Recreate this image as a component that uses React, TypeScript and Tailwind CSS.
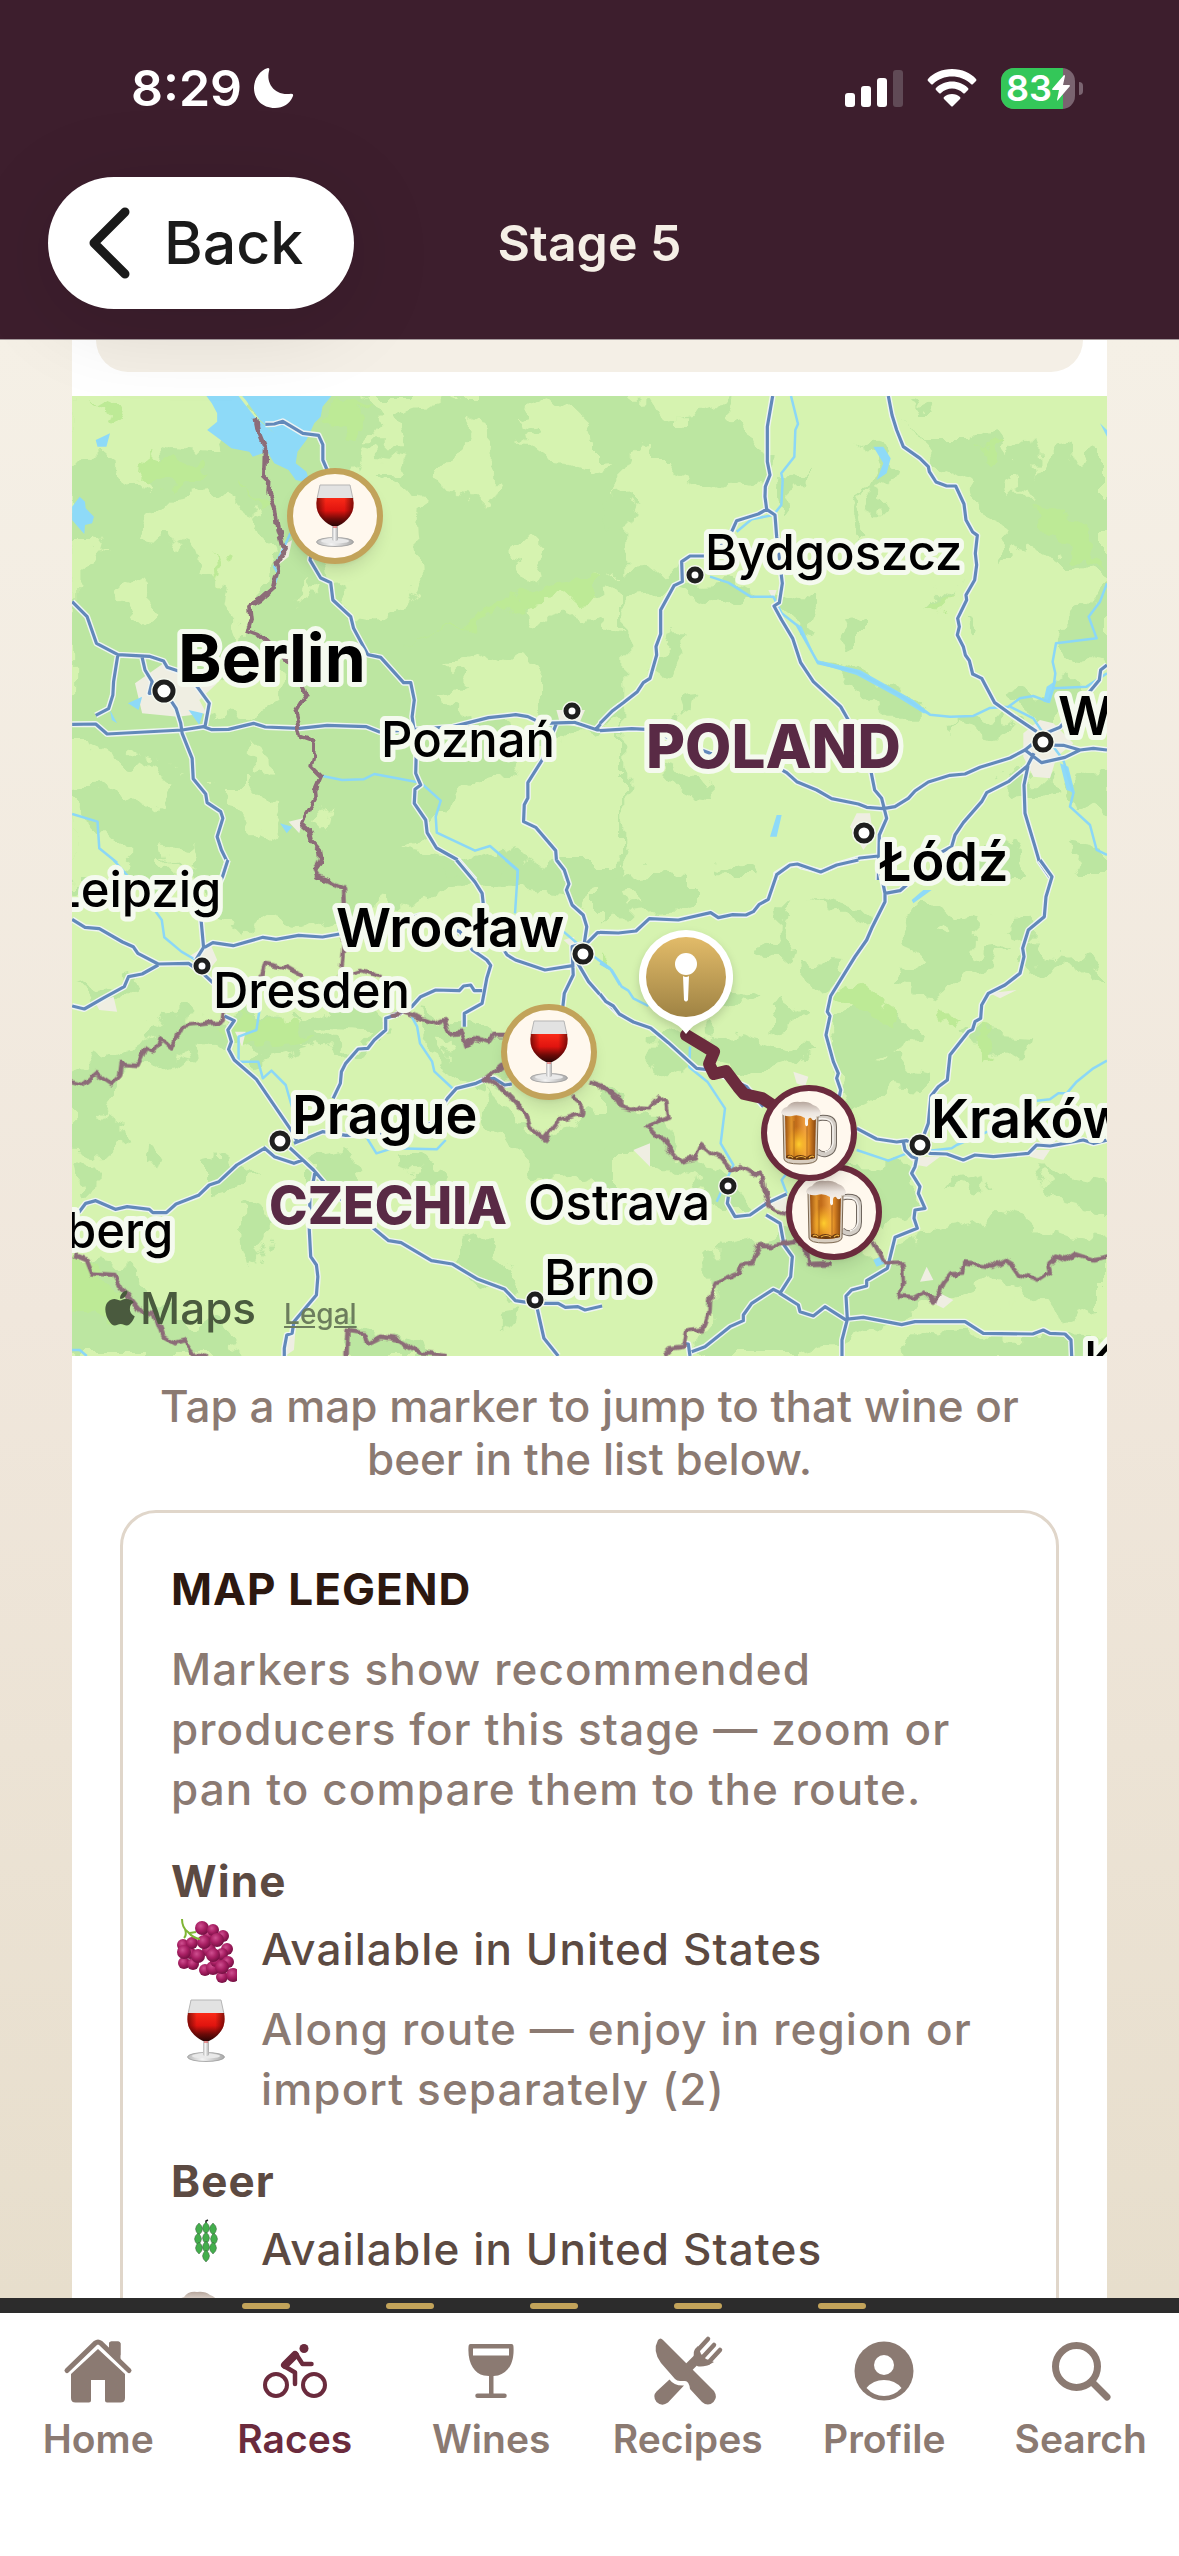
import type { ReactNode } from "react";
import { useState } from "react";
import { FaApple } from "react-icons/fa";
import clsx from "clsx";

type Tile = {
    id: string;
    transform: string;
    dark: string[];
    light: string[];
    lush: string[];
    water: string[];
    urban: string[];
    rivers: string[];
    roads: string[];
    borders: string[];
};

// The map is stored as four tiles, each with its own local units
const TILES: Tile[] = [
    {
        id: "nw",
        transform: "translate(60 380) scale(0.35714 0.33333)",
        dark: ["M20 30H1580V1520H20Z"],
        light: [
            "M20 30H520L560 150L470 130L440 220L300 200L240 330L140 240L20 250Z",
            "M290 350L420 330L560 400L600 520L590 610L530 680L520 780L460 690L470 600L400 590L380 520L300 480L210 470L240 400Z",
            "M20 480L110 480L150 540L60 560L60 640L20 640Z",
            "M840 210L980 230L900 300L1010 330L1000 440L1010 640L880 720L800 700L770 600L680 520L900 400L820 300Z",
            "M860 48H1130L950 110L970 190L850 190L900 120Z",
            "M1140 120L1210 140L1200 230L1260 300L1230 370L1130 370L1060 280L1110 210Z",
            "M1260 90L1380 50L1460 130L1568 220L1520 300L1420 260L1370 200L1280 210L1330 140Z",
            "M170 600L240 620L270 670L220 720L160 660Z",
            "M1270 500L1360 500L1330 590L1270 560Z",
            "M1080 860L1230 820L1360 860L1350 960L1280 1040L1150 1020L1060 940L1140 920Z",
            "M1320 640L1568 580V760L1450 700L1330 740Z",
            "M1380 1080L1568 1040V1500H1440L1240 1400L1130 1440L930 1400L1020 1350L1080 1260L1240 1200L1330 1130Z",
            "M80 1080L190 1150L330 1190L260 1280L150 1230L20 1240V1080Z",
            "M470 900L600 880L620 960L560 1010L470 990L420 1040L390 960Z",
            "M540 1090L600 1150L540 1180L510 1120Z",
            "M430 1200L530 1200L600 1280L560 1380L490 1300Z",
            "M300 1390L390 1400L370 1450L310 1460Z",
            "M20 1260L100 1330L200 1440L180 1500H20Z",
            "M760 1250L740 1340L710 1310Z",
            "M690 600L720 640L660 680Z",
        ],
        lush: [
            "M250 200L400 260L370 300L240 310Z",
            "M780 60L880 90L830 150L740 120Z",
            "M1340 610L1568 590V640L1330 670L1140 730L960 800L1100 740Z",
            "M430 500L450 560L440 600Z",
            "M90 60L180 100L140 140Z",
            "M510 330L590 360L560 400Z",
        ],
        water: [
            "M410 48H500L545 110L600 160L560 120L520 60L510 48H760L735 80L730 110L712 130L690 180L665 215L660 250L690 275L700 310L660 300L640 270L600 250L580 215L540 230L530 215L480 205L450 180L412 150L440 125L440 100L425 70Z",
            "M100 180L140 160L130 200L105 200Z",
            "M34 380L55 350L70 365L72 385L95 410L90 430L70 435L68 462L50 440L34 420Z",
            "M190 970L230 950L220 990Z",
            "M360 990L400 1000L390 1035Z",
            "M140 990L160 1030L145 1020Z",
            "M616 1330L650 1340L635 1360Z",
        ],
        urban: [
            "M210 910L290 850L370 910L440 910L390 960L410 1000L330 1010L230 1000Z",
            "M1390 990L1470 990L1450 1040L1400 1030Z",
            "M640 1325L680 1315L670 1360Z",
            "M620 500L650 480L640 530L605 560Z",
        ],
        rivers: [
            "M645 460L628 500L600 560L610 580L598 625",
            "M735 1188L790 1200L850 1198L880 1182L1010 1208L1066 1262L1052 1310L1055 1358L1162 1412L1204 1398L1282 1470L1280 1500",
            "M34 1302L105 1325L110 1405L160 1448",
        ],
        roads: [
            "M575 133L600 132L624 124L680 160L724 166L736 194V240L748 270L700 540L730 594L758 608L764 660L814 710L822 745L862 824L898 832L962 908L982 908L992 960L986 1010L998 1100L996 1180L1010 1215L994 1228L992 1270L1024 1320L1028 1358L1054 1404L1114 1440L1162 1500",
            "M34 665L76 710L102 790L162 824L250 829L290 843L300 862L350 880L384 920L418 970L406 1040",
            "M162 824L150 905L148 945L136 986L100 1006",
            "M230 832L238 870L258 905L250 940L292 932L325 985L338 1030L342 1060L370 1135L373 1196L408 1242L412 1268L450 1295L456 1315L440 1370L452 1410L468 1445L454 1490",
            "M34 1033L100 1032L132 1062L342 1050L402 1040L425 1049L472 1048L542 1030L575 1041L670 1045L748 1036L858 1040L895 1056L1100 1040L1200 1013L1276 1004L1310 1010L1350 1030L1440 1027L1505 1050H1568",
            "M1500 1048L1540 1000L1568 975",
            "M1390 1030L1350 1140L1310 1208V1254L1300 1274L1298 1325L1332 1342L1388 1412L1390 1440L1410 1468L1420 1500",
        ],
        borders: [
            "M548 118L555 155L574 205L572 285L586 300L584 340L602 390L608 440L622 498L632 505L604 550L610 575L598 625L562 660L530 680L534 720L526 750L556 762L640 850L685 925L690 945L658 1000L672 1070L712 1085V1130L704 1160L730 1188L714 1228L716 1260L676 1328L694 1345L702 1380L728 1412L732 1446L714 1470L720 1490L755 1502",
        ],
    },
    {
        id: "ne",
        transform: "translate(600 380) scale(0.33333)",
        dark: [
            "M0 60L150 48L190 110L400 70L450 180L540 230L490 320L400 300L330 340L270 330L230 240L140 240L110 180L80 260L0 270Z",
            "M20 360L120 350L90 430L20 470Z",
            "M610 250L600 320L550 380L540 320Z",
            "M770 170L830 170L870 230L900 250L860 300L830 320L870 400L840 400L810 330L770 420L820 480L770 490L740 430L790 350L830 270Z",
            "M910 110L950 180L1120 180L1180 150L1230 220L1290 170L1310 290L1400 160L1430 280L1480 180L1521 200V600L1440 540L1360 540L1280 490L1200 550L1220 470L1180 400L1140 330L1060 280L980 250Z",
            "M930 50L1010 90L950 90Z",
            "M0 590L220 570L260 600L380 590L460 640L420 690L240 630L0 650Z",
            "M500 620L620 660L660 730L620 760L560 710Z",
            "M720 730L780 720L780 780L750 800Z",
            "M1100 710L1150 750L1120 790Z",
            "M1070 610L1010 690L970 700L1030 640Z",
            "M660 860L820 890L960 970L970 1010L860 1010L760 930Z",
            "M1060 1030L1220 1000L1270 1060L1200 1080L1100 1060Z",
            "M1240 960L1400 880L1440 920L1340 1030L1270 990Z",
            "M1380 760L1521 600V860L1450 850Z",
            "M190 1170L320 1210L320 1260L260 1250Z",
            "M1200 1180L1350 1180L1400 1240L1260 1250Z",
            "M1420 1200L1521 1160V1320L1440 1290Z",
            "M220 760L260 760L220 850L160 870Z",
            "M1100 1440L1200 1400L1260 1500H1100Z",
            "M1400 1380L1521 1400V1500H1440Z",
            "M220 960L300 950L290 1000L230 990Z",
            "M0 1450L80 1400L30 1470L0 1500Z",
            "M360 1450L460 1470L450 1500H400Z",
        ],
        light: ["M240 100H270V140H240Z", "M1220 300L1260 300L1280 350L1240 350Z"],
        lush: [
            "M1070 620L1010 690L970 700Z",
            "M1150 200L1210 180L1180 240L1150 240Z",
            "M1280 370L1400 370L1470 470L1500 560L1380 480Z",
        ],
        water: [
            "M820 200L850 200L872 235L860 280L830 300L850 250Z",
            "M530 1305H545L530 1370H510Z",
            "M590 730L605 740L650 840L780 870L940 960L990 1000L970 1000L890 950L770 885L650 850Z",
            "M1380 1150L1405 1160L1425 1240L1400 1230Z",
            "M1500 130L1521 150V170Z",
            "M1340 920L1370 900L1350 970L1330 965Z",
        ],
        urban: [
            "M1270 1060L1320 1020L1360 1030L1420 1090L1370 1130L1350 1195L1300 1190L1270 1130Z",
            "M770 1300L810 1300L820 1370L790 1410L750 1340Z",
            "M505 630L530 630L520 660Z",
        ],
        rivers: [
            "M573 48L594 132L586 150L583 230L544 280L548 300L544 375L520 405L455 418L410 455",
            "M330 590L385 608L452 650H520L545 700L590 735L655 850L770 875L900 945L990 1004L1050 1010L1120 1008L1170 984L1225 980L1260 955L1300 948L1345 965L1360 925L1460 920L1521 880",
            "M1521 610L1500 665L1466 710L1490 775L1368 790L1358 845L1366 880L1360 925",
            "M1230 980L1300 1015L1330 1060L1390 1140L1420 1240L1410 1280L1470 1335L1490 1410L1521 1425",
        ],
        roads: [
            "M518 48L502 140V245L510 285L496 320L495 350L500 388L525 405L530 470L547 610L538 668L522 678L545 720L578 775L602 848L640 905L722 980L745 1020L800 1110L824 1230L845 1255L860 1315L838 1365L835 1500",
            "M500 388L475 402L410 422L395 455L340 528H270L245 545L247 605L222 617L182 690V762L168 800L170 825L150 895L130 908L112 935L70 968L38 992L0 1030",
            "M865 48L876 105L890 150L910 200L960 235L985 260L988 275L1008 306L1040 318H1067L1092 372L1098 420L1118 456L1132 466L1126 520L1130 555L1124 600L1098 645L1100 660L1073 715L1078 740L1072 765L1090 800L1096 825L1108 842L1118 882L1145 895L1184 968L1240 1008L1310 1055",
            "M0 1052L95 1046L140 1048L330 1120L500 1145L560 1178L590 1205L650 1230L695 1256L775 1272L800 1282L850 1286L885 1280L925 1255L945 1233L985 1206L1050 1186L1095 1182L1140 1162L1230 1134L1275 1110L1300 1090",
            "M1521 855L1502 870L1498 900L1465 940L1380 1042L1340 1058",
            "M1521 1110L1480 1105L1440 1110L1390 1096L1340 1095",
            "M1275 1110L1325 1148L1395 1132L1440 1110",
            "M1302 1120L1282 1158L1225 1205L1160 1238L1145 1265L1090 1328L1065 1365L1055 1400L1000 1430",
            "M1284 1158L1272 1215L1275 1300L1305 1400L1318 1445L1356 1500",
            "M528 1500V1482L570 1455L592 1452L605 1460L665 1475L710 1455L780 1434L835 1428",
        ],
        borders: [],
    },
    {
        id: "sw",
        transform: "translate(60 860) scale(0.35714 0.33333)",
        dark: [
            "M340 0H1040L1140 60L980 140L900 130L800 230L720 180L640 210L540 180L480 220L420 120Z",
            "M1260 30L1390 0H1568V60L1460 110L1300 90Z",
            "M20 640L180 560L330 460L480 480L470 560L330 600L200 640L120 750L200 820L130 880L20 870Z",
            "M480 460L620 480L700 560L560 600L500 560Z",
            "M640 460L860 430L940 480L880 560L760 600L680 540Z",
            "M980 450L1240 500L1300 650L1180 680L1060 620Z",
            "M1200 680L1330 840L1568 740V1020L1480 940L1360 980L1260 860L1160 780Z",
            "M240 860L300 870L280 930L230 920Z",
            "M700 900L800 880L850 960L780 1000L700 960Z",
            "M950 900L1080 920L1080 970L980 950Z",
            "M420 920L500 900L560 950L480 980L420 1000Z",
            "M510 1030L590 1080L530 1240L510 1130Z",
            "M40 930L100 900L90 1010L50 1010Z",
            "M20 1200L160 1220L280 1340L420 1400L560 1488H20Z",
            "M800 1400L900 1420L1080 1488H800Z",
            "M1130 1120L1240 1200L1290 1300L1190 1290L1120 1220Z",
            "M1240 1340L1290 1330L1280 1410L1240 1400Z",
            "M40 390L120 370L220 340L150 420Z",
        ],
        light: ["M720 510L860 520L830 560L770 570Z", "M300 20L400 60L370 90L300 70Z", "M1060 540L1110 560L1080 600Z"],
        lush: ["M20 1180L120 1240L200 1420L100 1380L20 1300Z", "M430 500L640 470L720 540L500 560Z"],
        water: [],
        urban: [
            "M360 290L420 250L440 300L410 340Z",
            "M100 430L150 410L160 455L110 450Z",
            "M630 1440L660 1400L655 1470L630 1488Z",
            "M1410 240L1440 230L1440 270Z",
            "M490 515L520 515L510 560Z",
        ],
        rivers: [
            "M150 0L225 90L285 180L292 232L340 275L380 300",
            "M560 440L550 510L500 530V605H555L568 655L592 632L632 675L652 750",
            "M985 470L1000 500L1008 550L1042 605L1048 634L1104 690L1080 715",
            "M860 835L886 880L930 865L1055 868L1080 840",
            "M1248 0L1282 32L1274 160",
            "M1410 215L1470 270L1540 325L1568 375",
            "M34 1470H55L75 1488",
        ],
        roads: [
            "M34 178L70 202L110 206L175 246L205 260L218 280L275 312L360 310L400 340L430 370",
            "M34 438L68 447L125 412L180 380L192 350L230 342L275 315",
            "M470 0L455 50L430 110L395 180L402 262L380 300",
            "M405 262L428 248L485 257L568 232L605 238L668 226L735 231L900 200L1010 165L1120 215L1155 270L1195 300L1206 316L1195 355L1182 430L1132 460V500",
            "M1110 0L1162 66L1182 100L1190 180L1252 285L1275 300L1358 330L1440 316",
            "M1390 0L1412 30L1425 72L1418 90L1434 135L1465 165L1475 200L1468 250L1434 260L1437 345L1412 400L1408 440",
            "M1475 250L1505 218H1568",
            "M1450 310L1480 365L1525 420L1568 465",
            "M460 468L488 482L470 510L480 545L472 568L488 600L550 658L650 815L665 848",
            "M1182 392L1160 392L1150 375L1130 378L1118 392L1052 390L1010 410L985 440L940 465L912 475V510L880 540L862 565L835 567L800 610L788 635L785 670L765 715",
            "M1265 672L1245 675L1215 655L1190 658L1165 670L1110 685L1085 715L1040 790L970 820L800 826L735 815L655 850",
            "M640 860L710 930L750 980L850 1080L920 1142L955 1148L1040 1202L1098 1212L1170 1258L1245 1288L1275 1322L1325 1330L1395 1330L1415 1342L1450 1340L1470 1350L1518 1338",
            "M570 862L600 890L655 910L680 900",
            "M572 865L495 915L445 965L418 975L388 1006L325 1032L298 1058H260L250 1048L188 1040L155 1048L100 1022L72 1030L52 1058",
            "M714 935L710 960L700 1000L698 1110L702 1190L718 1215L722 1250L718 1305L655 1385L650 1420L635 1425L628 1465V1488",
            "M1335 1340L1355 1435L1395 1488",
        ],
        borders: [
            "M730 0L714 32L722 48L795 85L800 200L785 350L840 330L900 352",
            "M34 664L65 672L100 640L145 672L165 650L170 612L220 615L240 565L262 575L280 535L310 562L340 500L452 485L455 460L565 350L575 312L640 325L680 350",
            "M920 460L960 455L1050 490L1075 478L1090 520L1125 515L1138 560L1160 535L1200 548L1215 525L1245 525",
            "M1480 665L1520 680L1568 720V740",
            "M1240 612L1192 655L1245 690L1305 765L1315 800L1358 838L1400 780L1440 765L1462 762V735L1435 710",
            "M40 1185L75 1200L90 1240L150 1245L175 1290L225 1355L268 1365L290 1430L320 1450L352 1440L378 1480L405 1488",
            "M802 1488L805 1412L855 1420L862 1450L900 1430L950 1440L1010 1480L1080 1488",
        ],
    },
    {
        id: "se",
        transform: "translate(600 860) scale(0.33333)",
        dark: [
            "M0 50L160 30L270 40L270 120L210 160L100 170L0 160Z",
            "M520 130L570 130L540 200L570 240L560 310L480 300L530 240Z",
            "M640 110L820 160L820 200L760 180Z",
            "M880 170L960 130L1040 140L1130 190L1120 280L1230 270L1180 330L1060 340L1010 400L900 380L960 290L890 240Z",
            "M590 290L740 300L720 370L640 380L600 330Z",
            "M760 380L840 420L970 540L840 600L1000 620L960 700L880 690L760 750L700 620L690 500L760 440Z",
            "M500 450L560 410L600 470L520 500Z",
            "M140 560L320 500L480 540L660 580L480 640L330 600L230 640L140 600Z",
            "M340 330L470 390L370 450Z",
            "M1060 500L1300 520L1290 570L1140 590Z",
            "M1190 180L1290 170L1280 330L1400 310L1521 380V340L1440 290L1330 280Z",
            "M0 690L180 780L250 900L400 950L480 1050H340L250 930L0 880Z",
            "M740 900L930 920L960 1050L840 1100L780 960Z",
            "M340 1150L600 1100L860 1200L980 1120L1200 1080L1521 1140V1330L1400 1380L1200 1250L1000 1330L900 1370L620 1488H280L340 1350Z",
            "M1030 980L1180 950L1130 1010Z",
            "M1320 930L1521 970V1060L1400 1030Z",
            "M940 1420L1521 1440V1488H900Z",
            "M0 120L60 140L0 200Z",
        ],
        light: ["M60 100L120 90L140 130L90 140Z", "M1030 200L1070 230L1020 240Z", "M1140 1290L1250 1320L1180 1360Z"],
        lush: ["M780 370L880 440L890 500L680 420Z", "M1150 500L1190 600L1145 610Z", "M1020 450L1100 460L1040 480Z", "M0 250L50 300L0 290Z"],
        water: ["M970 90L995 90L940 130L935 120Z", "M820 1200L840 1190L855 1210L830 1220Z"],
        urban: [
            "M580 635L625 650L615 680L590 670Z",
            "M490 1030L560 1010L560 1060Z",
            "M920 890L1020 890L980 920L950 915Z",
            "M1290 870L1350 870L1330 900L1290 890Z",
            "M1020 1300L1060 1320L1030 1345L1000 1330Z",
            "M100 870L150 850L150 920Z",
            "M1170 400L1250 390L1200 415Z",
            "M980 1220L1000 1260L960 1265Z",
        ],
        rivers: [
            "M0 310L35 330L65 380L85 392L100 415L145 438",
            "M270 560L268 622L322 665L375 745L362 850L400 915L350 1025",
            "M1521 602L1480 625L1430 665L1400 700L1375 700L1350 718L1310 722",
            "M770 870L865 902L920 880L1055 865L1070 855L1170 812",
            "M560 940L545 960L560 1000",
        ],
        roads: [
            "M0 217L55 219L108 213L148 176L235 180L332 158L355 173L398 164L438 165L460 155L478 133L505 118L530 44L570 15L592 12L662 36L710 15L775 0",
            "M0 402L18 425L40 438L58 462L100 486L152 504L205 548L290 625L330 630L440 680L490 740",
            "M835 0L855 100L900 92L960 40",
            "M855 100V125L815 205L800 240L765 290L692 408L682 455L690 468L678 525L700 605L715 640L710 655L722 690L718 710",
            "M1320 0L1356 50L1338 110L1333 170L1285 210L1268 265L1272 290L1260 340L1215 375L1165 400L1145 435L1142 475L1125 485L1118 508L1105 515L1050 585L1042 660L1015 680L993 708L985 790L970 830",
            "M770 805L830 837L890 846L920 842L960 860L990 880L1040 882L1090 900L1125 885L1180 890L1285 880L1310 855L1350 858L1450 840L1480 850L1521 840",
            "M910 845L915 870L935 890L950 895L945 920L935 940L960 980L955 1000L975 1045L945 1050L942 1075L952 1105L885 1132L862 1225L800 1262V1278L755 1290L738 1308L742 1378L726 1440V1488",
            "M385 1010L382 1030L405 1070L450 1065L500 1030L560 1002",
            "M498 1065L540 1090L552 1155L577 1190L572 1250L540 1300L595 1335L600 1355L640 1368L675 1340L735 1378L790 1372L905 1394L945 1385H1065L1095 1385L1150 1420L1298 1422L1330 1410L1350 1420L1395 1422L1413 1440L1415 1488",
            "M540 1298L520 1288L455 1330L430 1365V1382L390 1400L315 1460L275 1475",
            "M250 1450L265 1452L270 1488",
        ],
        borders: [
            "M0 680L50 718L62 742L95 750L120 740L150 742L175 710L198 725L205 770L175 780L145 800L175 832L190 835L205 865L240 905L285 895L300 855L330 880L365 895L395 930L420 918L465 942L482 935L490 990L505 1040L555 1062",
            "M190 1488L212 1465L250 1460L258 1415L310 1408L328 1360L330 1320L350 1270L420 1240L430 1212L450 1210L480 1158L515 1158L580 1145L620 1165L625 1212L695 1210",
            "M820 1145L855 1210L908 1208L912 1275L900 1310L940 1315L970 1298L1005 1328L1030 1265L1050 1240L1088 1238L1095 1210L1180 1220L1215 1200L1240 1215L1260 1245L1310 1265L1350 1238L1345 1210L1370 1190L1395 1200L1425 1180L1480 1198L1521 1190",
        ],
    },
];

const PLACES = [
    { name: "Berlin", x: 178, y: 682, kind: "capital" },
    { name: "Poznań", x: 381, y: 757, kind: "town" },
    { name: "Bydgoszcz", x: 705, y: 570, kind: "town" },
    { name: "POLAND", x: 646, y: 768, kind: "poland" },
    { name: "W", x: 1058, y: 735, kind: "city" },
    { name: "Łódź", x: 879, y: 881, kind: "city" },
    { name: "Leipzig", x: 53, y: 907, kind: "town" },
    { name: "Wrocław", x: 336, y: 947, kind: "city" },
    { name: "Dresden", x: 213, y: 1008, kind: "town" },
    { name: "Prague", x: 292, y: 1134, kind: "city" },
    { name: "CZECHIA", x: 269, y: 1224, kind: "czechia" },
    { name: "Ostrava", x: 528, y: 1220, kind: "town" },
    { name: "Kraków", x: 931, y: 1138, kind: "city" },
    { name: "berg", x: 66, y: 1248, kind: "town" },
    { name: "Brno", x: 544, y: 1295, kind: "town" },
    { name: "K", x: 1084, y: 1377, kind: "town" },
];

const PLACE_STYLES: Record<string, string> = {
    capital: "fill-black text-[66px] font-bold",
    city: "fill-black text-[54px] font-semibold",
    town: "fill-black text-[49px] font-medium",
    poland: "fill-[#592a45] text-[60px] font-extrabold",
    czechia: "fill-[#592a45] text-[52px] font-extrabold",
};

const DOTS = [
    [164, 691, 9],
    [572, 711, 6],
    [695, 575, 6],
    [1043, 742, 8],
    [864, 833, 8],
    [583, 954, 8],
    [202, 966, 6],
    [280, 1141, 8],
    [728, 1186, 6],
    [535, 1300, 6],
    [920, 1145, 8],
];

const MARKERS = [
    { id: "wine-1", kind: "wine", label: "Wine near Szczecin", x: 335, y: 516 },
    { id: "wine-2", kind: "wine", label: "Wine near the Czech border", x: 549, y: 1052 },
    { id: "beer-2", kind: "beer", label: "Beer in Żywiec", x: 834, y: 1212 },
    { id: "beer-1", kind: "beer", label: "Beer in Tychy", x: 809, y: 1133 },
];

function WineGlass({ id }: { id: string }) {
    return (
        <svg viewBox="0 0 38 64" className="h-16 w-[38px] overflow-visible" aria-hidden>
            <defs>
                <linearGradient id={`${id}-wine`} x1="0" y1="0" x2="0" y2="1">
                    <stop offset="0" stopColor="#fa2a18" />
                    <stop offset="0.45" stopColor="#e0140f" />
                    <stop offset="0.75" stopColor="#6d0a08" />
                    <stop offset="1" stopColor="#2c0505" />
                </linearGradient>
                <linearGradient id={`${id}-edge`}>
                    <stop offset="0" stopColor="#300" stopOpacity="0.6" />
                    <stop offset="0.25" stopColor="#300" stopOpacity="0" />
                    <stop offset="0.75" stopColor="#300" stopOpacity="0" />
                    <stop offset="1" stopColor="#300" stopOpacity="0.6" />
                </linearGradient>
                <linearGradient id={`${id}-glass`}>
                    <stop offset="0" stopColor="#b9b9b9" />
                    <stop offset="0.4" stopColor="#f4f4f4" />
                    <stop offset="1" stopColor="#a9a9a9" />
                </linearGradient>
            </defs>
            <path d="M4 1H34L37 15H1Z" fill="#e2e2e2" />
            <path d="M4 1H34L37 15M4 1L1 15" fill="none" stroke="#b5b5b5" />
            <ellipse cx="19" cy="58" rx="18.5" ry="4.5" fill={`url(#${id}-glass)`} stroke="#999" strokeWidth="0.8" />
            <ellipse cx="19" cy="57" rx="14" ry="2.5" fill="#e9e9e9" />
            <path d="M16 40H22V55Q22 57 19 57Q16 57 16 55Z" fill={`url(#${id}-glass)`} />
            <path d="M1 14H37Q39 25 34 32Q29 39 22 42H16Q9 39 4 32Q-1 25 1 14Z" fill={`url(#${id}-wine)`} />
            <path d="M1 14H37Q39 25 34 32Q29 39 22 42H16Q9 39 4 32Q-1 25 1 14Z" fill={`url(#${id}-edge)`} />
            <path d="M17 43H21" stroke="#e25555" strokeWidth="1.2" />
        </svg>
    );
}

function BeerMug({ id }: { id: string }) {
    return (
        <svg viewBox="0 0 56 64" className="h-16 w-14 overflow-visible" aria-hidden>
            <defs>
                <linearGradient id={`${id}-beer`}>
                    <stop offset="0" stopColor="#9c5212" />
                    <stop offset="0.2" stopColor="#e0942c" />
                    <stop offset="0.35" stopColor="#c06a18" />
                    <stop offset="0.65" stopColor="#f0a040" />
                    <stop offset="0.8" stopColor="#d37f22" />
                    <stop offset="1" stopColor="#85450f" />
                </linearGradient>
                <radialGradient id={`${id}-glow`} cx="0.45" cy="0.65" r="0.4">
                    <stop offset="0" stopColor="#ffce2e" />
                    <stop offset="1" stopColor="#ffb020" stopOpacity="0" />
                </radialGradient>
                <linearGradient id={`${id}-foam`} x1="0" y1="0" x2="0" y2="1">
                    <stop offset="0" stopColor="#b7a79d" />
                    <stop offset="0.45" stopColor="#ece5df" />
                    <stop offset="1" stopColor="#fffaf3" />
                </linearGradient>
            </defs>
            <path d="M36 18Q39 16 46 17Q53 18 53 26V42Q53 51 45 53Q40 54 36 50" fill="none" stroke="#6f665e" strokeWidth="6" />
            <path d="M36 18Q39 16 46 17Q53 18 53 26V42Q53 51 45 53Q40 54 36 50" fill="none" stroke="#d3cdc6" strokeWidth="4" />
            <path d="M37 18Q40 17 45 18Q51 19 52 26V42Q51 49 44 51" fill="none" stroke="#f6f3ef" strokeWidth="1.4" />
            <path d="M2 13H37L36 58Q35 63 19 63Q4 63 3 58Z" fill="#d8cdbf" stroke="#7b6750" strokeWidth="1" />
            <path d="M4 14H35L34 57Q20 61 5 57Z" fill={`url(#${id}-beer)`} />
            <path d="M4 14H35L34 57Q20 61 5 57Z" fill={`url(#${id}-glow)`} />
            <path d="M13 20V57M26 20V57" stroke="#9b5a17" strokeWidth="0.9" opacity="0.7" />
            <path d="M5 55Q9 52 13 56Q19 52 26 56Q30 52 34 55V57Q20 61 5 57Z" fill="#6b3a10" />
            <path d="M7 56Q10 54 12 57M15 57Q20 54 25 57M28 57Q31 54 33 56" fill="none" stroke="#f0b23e" strokeWidth="1.2" />
            <path
                d="M0 12Q1 7 6 6Q10 0 19 1Q27 0 32 4Q39 6 40 13Q38 17 35 15V18Q32 21 30 17Q28 16 27 19V24Q25 27 24 23V17Q18 13 11 15Q3 16 0 12Z"
                fill={`url(#${id}-foam)`}
            />
        </svg>
    );
}

const GRAPES = [
    [8, 44, 6], [17, 45, 6], [29, 51, 6], [37, 49, 7], [46, 58, 6], [57, 56, 7],
    [33, 31, 7], [40, 42, 6], [14, 34, 6], [33, 16, 6],
    [7, 26, 6], [16, 24, 6], [26, 9, 7], [37, 11, 6], [47, 17, 6], [51, 30, 6],
    [8, 33, 7], [22, 37, 7], [28, 23, 7], [41, 21, 7], [46, 35, 6], [37, 36, 7],
    [52, 43, 6], [46, 48, 7],
];

function Grapes() {
    return (
        <svg viewBox="0 0 61 64" className="h-16 w-[61px]" aria-hidden>
            <defs>
                <radialGradient id="grape" cx="0.4" cy="0.35" r="0.7">
                    <stop offset="0" stopColor="#cf4f90" />
                    <stop offset="0.5" stopColor="#a81f63" />
                    <stop offset="1" stopColor="#6d0d3d" />
                </radialGradient>
            </defs>
            {GRAPES.map(([cx, cy, r], i) => (
                <circle key={i} cx={cx} cy={cy} r={r} fill="url(#grape)" />
            ))}
            <path d="M6 0Q6 9 12 13Q17 19 24 20M9 10Q11 16 8 19M14 14L20 13" fill="none" stroke="#7fb534" strokeWidth="2" />
        </svg>
    );
}

const HOP_LEAVES = [
    [12, 9], [12, 19], [12, 28], [12, 37], [5, 10], [19, 10], [4, 20], [20, 20], [5, 29], [19, 29],
];

function Hops() {
    return (
        <svg viewBox="0 0 24 44" className="h-11 w-6" aria-hidden>
            <path d="M12 5V2L14 1" fill="none" stroke="#222" strokeWidth="1.5" />
            {HOP_LEAVES.map(([x, y], i) => (
                <path
                    key={i}
                    d={`M${x} ${y - 6}Q${x + 7} ${y} ${x} ${y + 6}Q${x - 7} ${y} ${x} ${y - 6}Z`}
                    fill="#43ae4c"
                    stroke="#3c5f40"
                    strokeWidth="0.5"
                />
            ))}
        </svg>
    );
}

function StatusBar() {
    return (
        <div className="flex h-[132px] items-center justify-between pt-11 pr-24 pl-[131px]">
            <div className="flex items-center gap-3">
                <span className="text-[50px] leading-[60px] font-semibold text-white">8:29</span>
                <svg viewBox="0 0 40 40" className="size-10" aria-hidden>
                    <path d="M14 0Q16 0 15 3C12 15 20 27 35 26Q40 25 39 28C36 36 29 40 21 40C8 40 0 31 0 20C0 11 6 2 14 0Z" fill="white" />
                </svg>
            </div>
            <div className="flex items-center gap-6">
                <svg viewBox="0 0 58 38" className="h-[38px] w-[58px]" aria-hidden>
                    <rect x="0" y="24" width="10" height="14" rx="3" fill="white" />
                    <rect x="16" y="17" width="10" height="21" rx="3" fill="white" />
                    <rect x="32" y="9" width="10" height="29" rx="3" fill="white" />
                    <rect x="48" y="1" width="10" height="37" rx="3" fill="#604a56" />
                </svg>
                <svg viewBox="0 0 50 38" className="h-[38px] w-[50px]" aria-hidden>
                    <path d="M25 0C35 0 44 4 49 10Q50 11 49 12L46 15Q45 16 44 15C39 10 32 7.500 25 7.500S11 10 6 15Q5 16 4 15L1 12Q0 11 1 10C6 4 15 0 25 0Z" fill="white" />
                    <path d="M25 12.500C31 12.500 37 15 41 19Q42 20 41 21L38 24Q37 25 36 24C33 21 29 19.500 25 19.500S17 21 14 24Q13 25 12 24L9 21Q8 20 9 19C13 15 19 12.500 25 12.500Z" fill="white" />
                    <path d="M25 25C28 25 31 26 33 28Q34 29 33 30L26 37Q25 38 24 37L17 30Q16 29 17 28C19 26 22 25 25 25Z" fill="white" />
                </svg>
                <div className="flex items-center gap-1">
                    <div className="relative flex h-[41px] w-[74px] items-center overflow-hidden rounded-[13px] bg-[#7a6470]">
                        <div className="absolute inset-y-0 left-0 w-[62px] bg-[#34c759]" />
                        <span className="relative pl-[5px] text-[36px] leading-10 font-semibold text-white">83</span>
                        <svg viewBox="0 0 18 26" className="relative h-[26px] w-[18px] shrink-0" aria-hidden>
                            <path d="M12 0L0 14Q0 15 1 15H7L5 25Q5 26 6 25L18 11Q18 10 17 10H11L13 1Q13 0 12 0Z" fill="white" />
                        </svg>
                    </div>
                    <div className="h-[13px] w-1 rounded-r-full bg-[#7a6470]" />
                </div>
            </div>
        </div>
    );
}

function RouteMap() {
    return (
        <div className="relative aspect-[1035/960] w-full overflow-hidden">
            <svg viewBox="72 396 1035 960" className="block size-full font-[Inter,sans-serif]" aria-label="Stage map">
                <defs>
                    <filter id="rough" x="0" y="0" width="1" height="1">
                        <feTurbulence type="fractalNoise" baseFrequency="0.035" numOctaves="3" seed="4" />
                        <feDisplacementMap in="SourceGraphic" scale="42" xChannelSelector="R" yChannelSelector="G" />
                    </filter>
                    <filter id="jagged" x="-0.1" y="-0.1" width="1.2" height="1.2">
                        <feTurbulence type="fractalNoise" baseFrequency="0.08" numOctaves="2" seed="9" />
                        <feDisplacementMap in="SourceGraphic" scale="9" xChannelSelector="R" yChannelSelector="G" />
                    </filter>
                </defs>
                <rect x="72" y="396" width="1035" height="960" fill="#d6f3b0" />
                <g filter="url(#rough)">
                    <rect x="20" y="340" width="1140" height="1080" fill="#d6f3b0" />
                    {TILES.map((tile) => (
                        <g key={tile.id} transform={tile.transform}>
                            <path d={tile.dark.join("")} fill="#bce6a1" />
                            <path d={tile.light.join("")} fill="#d6f3b0" />
                            <path d={tile.lush.join("")} fill="#bdea96" />
                        </g>
                    ))}
                </g>
                {TILES.map((tile) => (
                    <g key={tile.id} transform={tile.transform}>
                        <path d={tile.urban.join("")} fill="#efeee2" />
                        <path d={tile.water.join("")} fill="#8edaf8" />
                    </g>
                ))}
                <g fill="none" strokeLinejoin="round">
                    {TILES.map((tile) => (
                        <g key={tile.id} transform={tile.transform}>
                            <path d={tile.rivers.join("")} stroke="#8bd7f7" strokeWidth="2.5" vectorEffect="non-scaling-stroke" />
                            <path d={tile.roads.join("")} stroke="#eef4f4" strokeWidth="6" vectorEffect="non-scaling-stroke" />
                            <path d={tile.roads.join("")} stroke="#6289ba" strokeWidth="3.2" vectorEffect="non-scaling-stroke" />
                        </g>
                    ))}
                    <g filter="url(#jagged)">
                        {TILES.map((tile) => (
                            <g key={tile.id} transform={tile.transform}>
                                <path d={tile.borders.join("")} stroke="#8c6c78" strokeWidth="4.5" vectorEffect="non-scaling-stroke" />
                            </g>
                        ))}
                    </g>
                    <path
                        d="M686 1035L714 1052L709 1064L714 1074L726 1071L738 1087L744 1094L762 1098L780 1110"
                        stroke="#6b2b3d"
                        strokeWidth="12"
                        strokeLinecap="round"
                    />
                </g>
                {DOTS.map(([cx, cy, r]) => (
                    <g key={`${cx}-${cy}`}>
                        <circle cx={cx} cy={cy} r={r + 4} fill="#f4f8ee" />
                        <circle cx={cx} cy={cy} r={r} fill="white" stroke="#1f1f1f" strokeWidth="5" />
                    </g>
                ))}
                {PLACES.map((place) => (
                    <text
                        key={place.name}
                        x={place.x}
                        y={place.y}
                        className={PLACE_STYLES[place.kind]}
                        stroke="#f5faef"
                        strokeWidth="10"
                        strokeLinejoin="round"
                        paintOrder="stroke"
                    >
                        {place.name}
                    </text>
                ))}
            </svg>

            <div className="absolute bottom-5 left-7 flex items-baseline text-[#4a5a3e]">
                <FaApple className="size-10 self-center" aria-hidden />
                <span className="text-[44px] leading-[56px] font-medium">Maps</span>
                <a href="#legal" className="ml-7 text-[28px] leading-8 font-medium text-[#6c7d5d] underline">
                    Legal
                </a>
            </div>

            <button
                type="button"
                aria-label="Stage start"
                className="absolute h-[106px] w-[94px] -translate-x-1/2 drop-shadow-lg"
                style={{ left: `${((686 - 72) / 1035) * 100}%`, top: `${((930 - 396) / 960) * 100}%` }}
            >
                <svg viewBox="0 0 94 106" className="size-full" aria-hidden>
                    <defs>
                        <linearGradient id="pin" x1="0" y1="0" x2="0" y2="1">
                            <stop offset="0" stopColor="#e2bb69" />
                            <stop offset="1" stopColor="#9f8344" />
                        </linearGradient>
                    </defs>
                    <path d="M47 0A47 47 0 0 1 66 90Q54 94 47 104Q40 94 28 90A47 47 0 0 1 47 0Z" fill="white" />
                    <circle cx="47" cy="47" r="40" fill="url(#pin)" />
                    <circle cx="47" cy="34" r="11" fill="white" />
                    <path d="M44 46Q47 48 50 46L49 70Q47 73 45 70Z" fill="white" />
                </svg>
            </button>
            {MARKERS.map((marker) => (
                <button
                    key={marker.id}
                    type="button"
                    aria-label={marker.label}
                    className={clsx(
                        "absolute flex size-24 -translate-x-1/2 -translate-y-1/2 items-center justify-center rounded-full border-6 bg-[#fff8ee] shadow-lg",
                        marker.kind === "wine" ? "border-[#c2a35a]" : "border-[#6b2b3d]"
                    )}
                    style={{
                        left: `${((marker.x - 72) / 1035) * 100}%`,
                        top: `${((marker.y - 396) / 960) * 100}%`,
                    }}
                >
                    {marker.kind === "wine" ? <WineGlass id={marker.id} /> : <BeerMug id={marker.id} />}
                </button>
            ))}
        </div>
    );
}

function LegendRow({ icon, muted, children }: { icon: ReactNode; muted?: boolean; children: ReactNode }) {
    return (
        <li className="flex gap-5">
            <span className="flex h-[60px] w-[70px] shrink-0 items-start justify-center">{icon}</span>
            <span className={muted ? "text-[#8b7a72]" : "text-[#5c4a42]"}>{children}</span>
        </li>
    );
}

function MapLegend() {
    return (
        <section className="mx-12 mt-6 rounded-[36px] border-3 border-[#e0d6ca] px-12 pt-[46px] pb-12 text-[44px] leading-[60px] font-medium tracking-wide text-[#8b7a72]">
            <h2 className="font-bold text-[#2c1810]">MAP LEGEND</h2>
            <p className="mt-5">
                Markers show recommended producers for this stage — zoom or pan to compare them to the route.
            </p>
            <h3 className="mt-8 font-bold text-[#5c4a42]">Wine</h3>
            <ul className="mt-2 flex flex-col gap-5">
                <LegendRow icon={<Grapes />}>Available in United States</LegendRow>
                <LegendRow icon={<WineGlass id="legend" />} muted>
                    Along route — enjoy in region or import separately (2)
                </LegendRow>
            </ul>
            <h3 className="mt-8 font-bold text-[#5c4a42]">Beer</h3>
            <ul className="mt-2 flex flex-col gap-3">
                <LegendRow icon={<Hops />}>Available in United States</LegendRow>
                <LegendRow icon={<BeerMug id="legend-beer" />} muted>
                    Along route — enjoy in region or import separately (2)
                </LegendRow>
            </ul>
        </section>
    );
}

const TABS = [
    {
        name: "Home",
        icon: (
            <>
                <path d="M47 16V9Q47 6.500 49.500 6.500H56Q58.500 6.500 58.500 9V30Z" fill="currentColor" />
                <path d="M4.500 35.500L33.500 8.500Q36 6 38.500 8.500L67.500 35.500" fill="none" stroke="white" strokeWidth="10" />
                <path d="M5 35.500L33.500 8Q36 6 38.500 8L67 35.500" fill="none" stroke="currentColor" strokeWidth="5" strokeLinecap="round" />
                <path d="M47 16V9Q47 6.500 49.500 6.500H56Q58.500 6.500 58.500 9V27Z" fill="currentColor" />
                <path d="M36 14L63 39V63Q63 67.500 58.500 67.500H45Q43 67.500 43 65.500V45H29V65.500Q29 67.500 27 67.500H13.500Q9 67.500 9 63V39Z" fill="currentColor" />
            </>
        ),
    },
    {
        name: "Races",
        icon: (
            <g fill="none" stroke="currentColor" strokeLinecap="round" strokeLinejoin="round">
                <circle cx="17" cy="50" r="11" strokeWidth="4" />
                <circle cx="55" cy="50" r="11" strokeWidth="4" />
                <circle cx="45" cy="13.500" r="4.500" fill="currentColor" strokeWidth="0" />
                <path d="M36 20L26 30" strokeWidth="8" />
                <path d="M37 19L43.500 29H52.500M25 31L36 37.500V49" strokeWidth="4.500" />
            </g>
        ),
    },
    {
        name: "Wines",
        icon: (
            <>
                <path
                    fillRule="evenodd"
                    d="M15.500 9H56.500Q58.500 9 58.500 12C59.500 28 53 38 43 40.500L38.500 41V58.500H49.500A2 2 0 0 1 49.500 63H22.500A2 2 0 0 1 22.500 58.500H34V41L29 40.500C19 38 12.500 28 13.500 12Q13.500 9 15.500 9ZM18 13.500V20.500H54V13.500Z"
                    fill="currentColor"
                />
            </>
        ),
    },
    {
        name: "Recipes",
        icon: (
            <>
                <path d="M17.500 44.500Q22 51 32 50.500L16 67.500Q10 72 4.500 67Q0 61 4.500 56.500Z" fill="currentColor" />
                <path d="M33 36L48 21" stroke="currentColor" strokeWidth="9" />
                <path d="M43 26Q39 16 46 11L49 19L54 24L62 27Q52 33 45 31Z" fill="currentColor" />
                <path d="M56 4L45 16V26L50 28H56L68 15M62 10L50 23" fill="none" stroke="currentColor" strokeWidth="4.500" strokeLinecap="round" strokeLinejoin="round" />
                <path d="M6 5Q8.500 2 11 5L62 56Q66 62 61.500 67Q56 72 50 67L38 54Q37 46 33 46H28Q25 46 23 44L9 28Q0 16 6 5Z" fill="currentColor" />
            </>
        ),
    },
    {
        name: "Profile",
        icon: (
            <>
                <circle cx="36" cy="36" r="29.500" fill="currentColor" />
                <circle cx="36" cy="30" r="10" fill="white" />
                <path d="M18.500 53Q25 45 36 45T53.500 53Q46 61 36 61T18.500 53Z" fill="white" />
            </>
        ),
    },
    {
        name: "Search",
        icon: (
            <g fill="none" stroke="currentColor" strokeLinecap="round">
                <circle cx="31.500" cy="31.500" r="21" strokeWidth="7" />
                <path d="M47 47L62 62" strokeWidth="7" />
            </g>
        ),
    },
];

function TabBar() {
    const [active, setActive] = useState("Races");

    return (
        <footer className="relative z-10 shrink-0 bg-white">
            <div className="flex h-[15px] items-center gap-24 bg-[#2c2c2c] pl-[242px]">
                {[0, 1, 2, 3, 4].map((dash) => (
                    <span key={dash} className="h-[6px] w-12 rounded-sm bg-[#c2a35a]" />
                ))}
            </div>
            <nav className="grid h-[243px] grid-cols-6 items-start pt-[22px]">
                {TABS.map((tab) => (
                    <button
                        key={tab.name}
                        type="button"
                        onClick={() => setActive(tab.name)}
                        className={clsx(
                            "flex flex-col items-center gap-2 text-[39px] leading-[48px] font-semibold",
                            active === tab.name ? "text-[#6b2b3d]" : "text-[#8b7a72]"
                        )}
                    >
                        <svg viewBox="0 0 72 72" className="size-[72px]" aria-hidden>
                            {tab.icon}
                        </svg>
                        {tab.name}
                    </button>
                ))}
            </nav>
        </footer>
    );
}

export default function App() {
    return (
        <div className="flex h-screen flex-col overflow-hidden bg-white font-[Inter,sans-serif]">
            <header className="relative z-10 h-[340px] shrink-0 border-b border-[#a59a9c] bg-[#3d1e2d]">
                <StatusBar />
                <div className="grid grid-cols-[1fr_auto_1fr] items-center px-12 pt-[45px]">
                    <button
                        type="button"
                        className="flex h-[132px] w-[306px] items-center rounded-full bg-white pl-10 text-[59px] font-medium text-[#1a1a1a] shadow-[0_12px_90px_rgba(0,0,0,0.12)]"
                    >
                        <svg viewBox="0 0 44 72" className="mr-8 h-[72px] w-11" aria-hidden>
                            <path d="M37 5L6 36L37 67" fill="none" stroke="currentColor" strokeWidth="9" strokeLinecap="round" strokeLinejoin="round" />
                        </svg>
                        Back
                    </button>
                    <h1 className="text-[50px] leading-[60px] font-semibold text-[#f5efe6]">Stage 5</h1>
                </div>
            </header>

            <main className="min-h-0 flex-1 overflow-y-auto bg-linear-to-b from-[#f5f0e6] via-[#f0e7dc] to-[#e7decc] px-[72px] [scrollbar-width:none]">
                <div className="bg-white pb-12">
                    <div className="mx-6 mb-6 h-8 rounded-b-[32px] bg-[#f4efe6]" />
                    <RouteMap />
                    <p className="mt-6 px-16 text-center text-[44px] leading-[53px] font-medium text-[#8b7a72]">
                        Tap a map marker to jump to that wine or beer in the list below.
                    </p>
                    <MapLegend />
                </div>
            </main>
            <TabBar />
        </div>
    );
}
